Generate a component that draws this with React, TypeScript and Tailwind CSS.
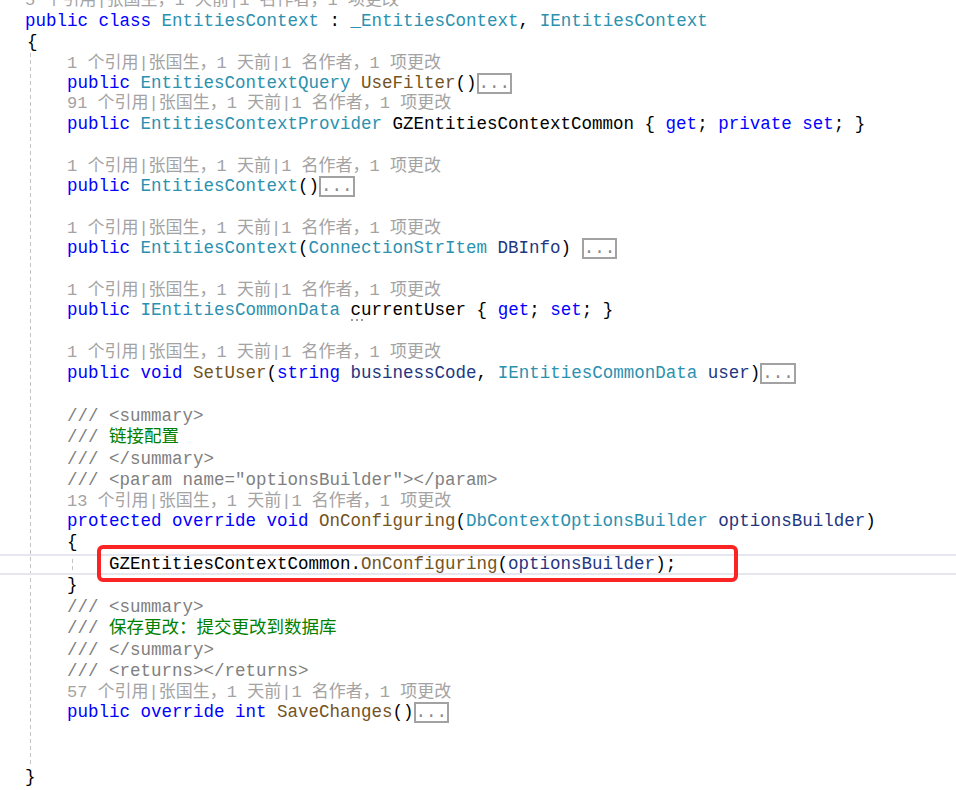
import type { ReactNode } from "react";

// token colours, Visual Studio light theme
const KIND = {
  k: "text-[#0000ff]",
  t: "text-[#2b91af]",
  f: "text-[#74531f]",
  p: "text-[#1f377f]",
  c: "text-[#808080]",
  g: "text-[#008000]",
  n: "text-[#000000]",
} as const;

type Kind = keyof typeof KIND;
type Tok = [Kind, string];

const INDENT = ["pl-[25px]", "pl-[67px]", "pl-[109px]"];

const META = "1 个引用|张国生，1 天前|1 名作者，1 项更改";

function Row({
  indent = 0,
  className = "h-[21.5px] leading-[21.5px]",
  children,
}: {
  indent?: number;
  className?: string;
  children?: ReactNode;
}) {
  return <div className={`whitespace-pre ${INDENT[indent]} ${className}`}>{children}</div>;
}

// CodeLens line, a bit shorter than a code line
function Meta({ indent = 1, count = "1" }: { indent?: number; count?: string }) {
  return (
    <Row indent={indent} className="h-[19.25px] text-[17px] leading-[19.25px] text-[#a3a3a3]">
      {count + META.slice(1)}
    </Row>
  );
}

function Code({ indent = 1, toks, fold }: { indent?: number; toks: Tok[]; fold?: boolean }) {
  return (
    <Row indent={indent}>
      {toks.map(([k, s], i) => (
        <span key={i} className={KIND[k]}>
          {s}
        </span>
      ))}
      {fold && <Fold />}
    </Row>
  );
}

function Fold() {
  return (
    <span className="inline-block h-[21px] border-2 border-[#a2a2a2] align-top leading-[16px] text-[#8a8a8a]">
      ...
    </span>
  );
}

function Doc({ tag, green }: { tag?: string; green?: string }) {
  return (
    <Row indent={1}>
      <span className={KIND.c}>/// </span>
      {tag && <span className={KIND.c}>{tag}</span>}
      {green && <span className={KIND.g}>{green}</span>}
    </Row>
  );
}

export default function App() {
  return (
    <div className="relative h-[790px] w-[956px] overflow-hidden bg-white font-['Liberation_Mono','Noto_Sans_CJK_SC',monospace] text-[17.5px] text-black">
      {/* indent guide */}
      <div className="absolute left-[30px] top-[53px] h-[714px] w-px bg-[repeating-linear-gradient(to_bottom,#c4c4c4_0px,#c4c4c4_4px,transparent_4px,transparent_7px)]" />

      <div className="-mt-[8.65px]">
        <Meta indent={0} count="5" />
        <Code
          indent={0}
          toks={[
            ["k", "public class "],
            ["t", "EntitiesContext"],
            ["n", " : "],
            ["t", "_EntitiesContext"],
            ["n", ", "],
            ["t", "IEntitiesContext"],
          ]}
        />
        <Row indent={0}>
          <span className="pl-[2px]">{"{"}</span>
        </Row>

        <Meta />
        <Code
          toks={[
            ["k", "public "],
            ["t", "EntitiesContextQuery "],
            ["f", "UseFilter"],
            ["n", "()"],
          ]}
          fold
        />
        <Meta count="91" />
        <Code
          toks={[
            ["k", "public "],
            ["t", "EntitiesContextProvider "],
            ["n", "GZEntitiesContextCommon { "],
            ["k", "get"],
            ["n", "; "],
            ["k", "private set"],
            ["n", "; }"],
          ]}
        />
        <Row />

        <Meta />
        <Code
          toks={[
            ["k", "public "],
            ["t", "EntitiesContext"],
            ["n", "()"],
          ]}
          fold
        />
        <Row />

        <Meta />
        <Code
          toks={[
            ["k", "public "],
            ["t", "EntitiesContext"],
            ["n", "("],
            ["t", "ConnectionStrItem "],
            ["p", "DBInfo"],
            ["n", ") "],
          ]}
          fold
        />
        <Row />

        <Meta />
        <Row indent={1}>
          <span className={KIND.k}>public </span>
          <span className={KIND.t}>IEntitiesCommonData </span>
          <span className="relative">
            currentUser
            <span className="absolute left-0 top-[19px] h-[2px] w-[14px] bg-[repeating-linear-gradient(to_right,#9a9a9a_0px,#9a9a9a_2px,transparent_2px,transparent_5px)]" />
          </span>
          <span> {"{"} </span>
          <span className={KIND.k}>get</span>
          <span>; </span>
          <span className={KIND.k}>set</span>
          <span>; {"}"}</span>
        </Row>
        <Row />

        <Meta />
        <Code
          toks={[
            ["k", "public void "],
            ["f", "SetUser"],
            ["n", "("],
            ["k", "string "],
            ["p", "businessCode"],
            ["n", ", "],
            ["t", "IEntitiesCommonData "],
            ["p", "user"],
            ["n", ")"],
          ]}
          fold
        />
        <Row />

        <Doc tag="<summary>" />
        <Doc green="链接配置" />
        <Doc tag="</summary>" />
        <Doc tag={'<param name="optionsBuilder"></param>'} />
        <Meta count="13" />
        <Code
          toks={[
            ["k", "protected override void "],
            ["f", "OnConfiguring"],
            ["n", "("],
            ["t", "DbContextOptionsBuilder "],
            ["p", "optionsBuilder"],
            ["n", ")"],
          ]}
        />
        <Row indent={1}>{"{"}</Row>

        {/* current line */}
        <div className="relative h-[21.5px] whitespace-pre border-y-2 border-[#e6e6ee] pl-[109px] leading-[17.5px]">
          <div className="absolute left-[72px] top-[3px] h-[13px] w-px bg-[repeating-linear-gradient(to_bottom,#c4c4c4_0px,#c4c4c4_4px,transparent_4px,transparent_7px)]" />
          <span>GZEntitiesContextCommon.</span>
          <span className={KIND.f}>OnConfiguring</span>
          <span>(</span>
          <span className={KIND.p}>optionsBuilder</span>
          <span>);</span>
          <div className="absolute left-[97px] top-[-11px] h-[37px] w-[641px] rounded-[6px] border-4 border-[#fb2424]" />
        </div>

        <Row indent={1}>{"}"}</Row>
        <Doc tag="<summary>" />
        <Doc green="保存更改：提交更改到数据库" />
        <Doc tag="</summary>" />
        <Doc tag="<returns></returns>" />
        <Meta count="57" />
        <Code
          toks={[
            ["k", "public override int "],
            ["f", "SaveChanges"],
            ["n", "()"],
          ]}
          fold
        />
        <Row />
        <Row />
        <Row indent={0}>{"}"}</Row>
      </div>
    </div>
  );
}
